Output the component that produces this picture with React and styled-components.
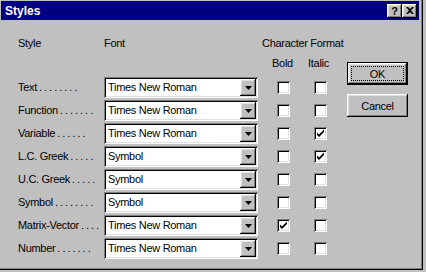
import React from "react";
import styled, { createGlobalStyle } from "styled-components";

const rows = [
  { label: "Text", dots: 8, font: "Times New Roman", bold: false, italic: false },
  { label: "Function", dots: 7, font: "Times New Roman", bold: false, italic: false },
  { label: "Variable", dots: 6, font: "Times New Roman", bold: false, italic: true },
  { label: "L.C. Greek", dots: 5, font: "Symbol", bold: false, italic: true },
  { label: "U.C. Greek", dots: 5, font: "Symbol", bold: false, italic: false },
  { label: "Symbol", dots: 8, font: "Symbol", bold: false, italic: false },
  { label: "Matrix-Vector", dots: 4, font: "Times New Roman", bold: true, italic: false },
  { label: "Number", dots: 7, font: "Times New Roman", bold: false, italic: false },
];

const Global = createGlobalStyle`
  html, body {
    margin: 0;
    background: #c0c0c0;
  }
  body {
    font-family: "Liberation Sans", Arial, sans-serif;
    font-size: 11px;
    letter-spacing: -0.3px;
    color: #000;
  }
`;

const raised = `
  box-shadow: inset -1px -1px #000, inset 1px 1px #fff,
    inset -2px -2px #808080, inset 2px 2px #dfdfdf;
`;

const sunken = `
  box-shadow: inset 1px 1px #808080, inset -1px -1px #fff,
    inset 2px 2px #000, inset -2px -2px #dfdfdf;
`;

const Window = styled.div`
  width: 423px;
  height: 270px;
  box-sizing: border-box;
  padding: 1px 3px 3px 1px;
  background: #c0c0c0;
  border-right: 1px solid #000;
  border-bottom: 1px solid #000;
  box-shadow: inset -1px -1px #808080;
  display: flex;
  flex-direction: column;
`;

const TitleBar = styled.div`
  height: 19px;
  background: #000080;
  display: flex;
  align-items: center;
  padding: 0 2px 0 4px;
  color: #fff;
  font-weight: bold;
  font-size: 12px;
  letter-spacing: 0;
`;

const Title = styled.span`
  flex: 1;
`;

const TitleButton = styled.div`
  width: 15px;
  height: 14px;
  background: #c0c0c0;
  ${raised}
  display: flex;
  align-items: center;
  justify-content: center;
  color: #000;
  font-weight: bold;
  font-size: 11px;
`;

const Body = styled.div`
  display: flex;
  padding: 17px 0 0 17px;
  gap: 9px;
`;

const Table = styled.div`
  display: flex;
  flex-direction: column;
`;

const Line = styled.div`
  display: grid;
  grid-template-columns: 86px 154px 6px 39px 35px;
  align-items: center;
  height: ${(p) => p.$h || "13px"};
  line-height: 13px;
  margin-bottom: ${(p) => p.$mb || "0"};
  white-space: nowrap;
`;

const Group = styled.span`
  grid-column: 4 / span 2;
  margin-left: -2px;
`;

const Sub = styled.span`
  text-align: center;
  margin-right: ${(p) => p.$shift || "0"};
`;

const Rows = styled.div`
  display: flex;
  flex-direction: column;
  gap: 2px;
`;

const Label = styled.span`
  white-space: nowrap;
`;

const Dots = styled.span`
  margin-left: 2px;
  letter-spacing: 2px;
`;

const Combo = styled.div`
  height: 21px;
  background: #fff;
  ${sunken}
  display: flex;
  align-items: center;
  padding: 2px;
  box-sizing: border-box;
`;

const ComboText = styled.span`
  flex: 1;
  padding-left: 2px;
`;

const DropButton = styled.div`
  width: 16px;
  height: 17px;
  background: #c0c0c0;
  ${raised}
  display: flex;
  align-items: center;
  justify-content: center;
`;

const Check = styled.div`
  width: 13px;
  height: 13px;
  justify-self: center;
  background: #fff;
  ${sunken}
  display: flex;
  align-items: center;
  justify-content: center;
`;

const Buttons = styled.div`
  display: flex;
  flex-direction: column;
  gap: 9px;
  margin-top: 25px;
`;

const Button = styled.div`
  width: 61px;
  height: 23px;
  box-sizing: border-box;
  background: #c0c0c0;
  ${raised}
  display: flex;
  align-items: center;
  justify-content: center;
  ${(p) =>
    p.$default &&
    `
    border: 1px solid #000;
  `}
`;

const Focus = styled.span`
  outline: 1px dotted #000;
  width: 51px;
  height: 13px;
  display: flex;
  align-items: center;
  justify-content: center;
`;

const Arrow = () => (
  <svg width="7" height="4" viewBox="0 0 7 4">
    <path d="M0 0h7L3.5 4z" fill="#000" />
  </svg>
);

const Tick = () => (
  <svg width="9" height="9" viewBox="0 0 9 9">
    <path d="M1 3.5l2 2 5-5v2.5l-5 5-2-2z" fill="#000" />
  </svg>
);

const Close = () => (
  <svg width="8" height="7" viewBox="0 0 8 7">
    <path d="M0 0h2l2 2 2-2h2L5 3.5 8 7H6L4 5 2 7H0l3-3.5z" fill="#000" />
  </svg>
);

export default function App() {
  return (
    <>
      <Global />
      <Window>
        <TitleBar>
          <Title>Styles</Title>
          <TitleButton>?</TitleButton>
          <TitleButton>
            <Close />
          </TitleButton>
        </TitleBar>
        <Body>
          <Table>
            <Line $mb="7px">
              <span>Style</span>
              <span>Font</span>
              <span />
              <Group>Character Format</Group>
            </Line>
            <Line $mb="7px">
              <span />
              <span />
              <span />
              <Sub $shift="2px">Bold</Sub>
              <Sub $shift="4px">Italic</Sub>
            </Line>
            <Rows>
              {rows.map((r) => (
                <Line key={r.label} $h="21px">
                  <Label>
                    {r.label}
                    <Dots>{".".repeat(r.dots)}</Dots>
                  </Label>
                  <Combo>
                    <ComboText>{r.font}</ComboText>
                    <DropButton>
                      <Arrow />
                    </DropButton>
                  </Combo>
                  <span />
                  <Check>{r.bold && <Tick />}</Check>
                  <Check>{r.italic && <Tick />}</Check>
                </Line>
              ))}
            </Rows>
          </Table>
          <Buttons>
            <Button $default>
              <Focus>OK</Focus>
            </Button>
            <Button>Cancel</Button>
          </Buttons>
        </Body>
      </Window>
    </>
  );
}
